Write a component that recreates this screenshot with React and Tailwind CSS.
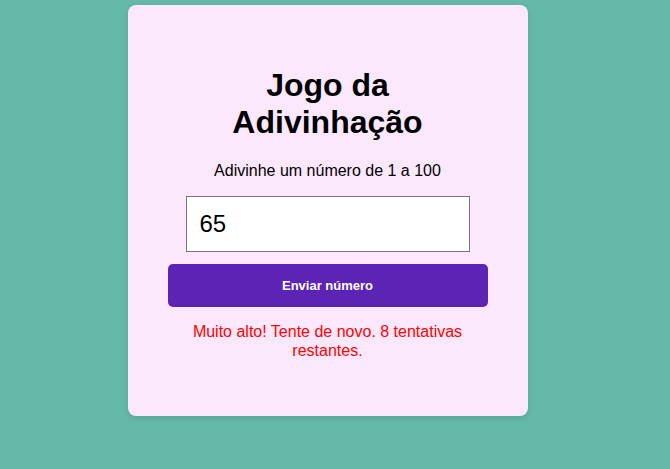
export default function App() {
  return (
    <div className="min-h-[469px] bg-[#64b9a8] flex justify-center pr-[15px] font-['Liberation_Sans',Arial,sans-serif]">
      <div className="mt-[5px] mb-auto w-[400px] rounded-lg bg-[#fbe8fc] px-10 pt-10 pb-10 text-center shadow-[0_2px_6px_rgba(0,0,0,0.12)]">
        <h1 className="my-[21.5px] text-[32px] font-bold leading-[37px] text-black">
          Jogo da Adivinhação
        </h1>
        <p className="mb-4 text-base leading-[18.4px] text-black">
          Adivinhe um número de 1 a 100
        </p>
        <input
          type="number"
          defaultValue="65"
          className="mx-auto block h-[56px] w-[284px] border border-[#767676] bg-white px-[13px] text-2xl text-black outline-none"
        />
        <button className="mt-3 h-[43px] w-full rounded-[5px] bg-[#5b24b5] text-[13px] font-bold text-white">
          Enviar número
        </button>
        <p className="my-4 text-base leading-[18.4px] text-[#ff0000]">
          Muito alto! Tente de novo. 8 tentativas restantes.
        </p>
      </div>
    </div>
  );
}
